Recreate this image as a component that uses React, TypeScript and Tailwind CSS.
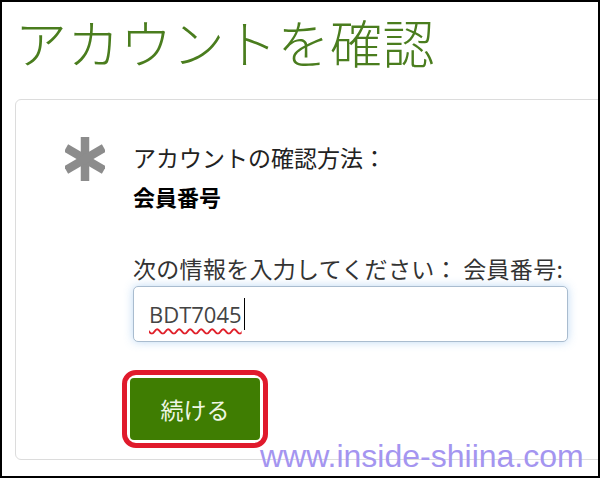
function Asterisk() {
  return (
    <svg width="40" height="44" viewBox="0 0 40 44" className="block">
      <g stroke="#8c8c8c" strokeWidth="8.5">
        <line x1="20" y1="0" x2="20" y2="44" />
        <line x1="1" y1="11" x2="39" y2="33" />
        <line x1="1" y1="33" x2="39" y2="11" />
      </g>
    </svg>
  );
}

function App() {
  return (
    <div className="relative w-[600px] h-[478px] overflow-hidden border-2 border-black bg-white font-['Noto_Sans_CJK_JP',sans-serif]">
      <h1 className="pl-[13px] pt-[14px] text-[52px] leading-[52px] font-light text-[#4a7d1e] tracking-[0.5px]">
        アカウントを確認
      </h1>

      {/* card */}
      <div className="ml-[13px] mt-[31px] w-[620px] h-[361px] rounded-[6px] border border-[#dcdcdc] flex">
        <div className="pl-[49px] pt-[37px]">
          <Asterisk />
        </div>
        <div className="ml-[28px] pt-[43px] text-[#222]">
          <p className="text-[23px] leading-[28px]">アカウントの確認方法：</p>
          <p className="mt-[11px] text-[22px] leading-[28px] font-bold text-black">会員番号</p>
          <p className="mt-[44px] text-[23px] leading-[28px] text-[#333] tracking-[0.3px] whitespace-nowrap">
            次の情報を入力してください： 会員番号:
          </p>
          <div className="mt-[4px] w-[435px] h-[56px] rounded-[5px] border border-[#a9bccf] bg-white shadow-[0_0_10px_rgba(110,170,230,0.45)] flex items-center pl-[15px]">
            <span className="font-['Open_Sans',sans-serif] text-[22px] text-[#444] underline decoration-wavy decoration-[#e0202a] decoration-[1.5px] underline-offset-[5px]">
              BDT7045
            </span>
            <span className="ml-[2px] w-px h-[32px] bg-black" />
          </div>
          <div className="mt-[28px] -ml-[11px] w-[146px] h-[78px] rounded-[14px] border-[5px] border-[#e01a2c] p-[3px]">
            <button className="w-full h-full rounded-[4px] bg-[#3f7d02] text-[#eef7e4] text-[23px] leading-none">
              続ける
            </button>
          </div>
        </div>
      </div>

      {/* watermark */}
      <div className="absolute left-[258px] top-[436px] font-['Liberation_Sans',sans-serif] text-[32px] leading-[36px] text-[#a495f0]">
        www.inside-shiina.com
      </div>
    </div>
  );
}

export default App;
